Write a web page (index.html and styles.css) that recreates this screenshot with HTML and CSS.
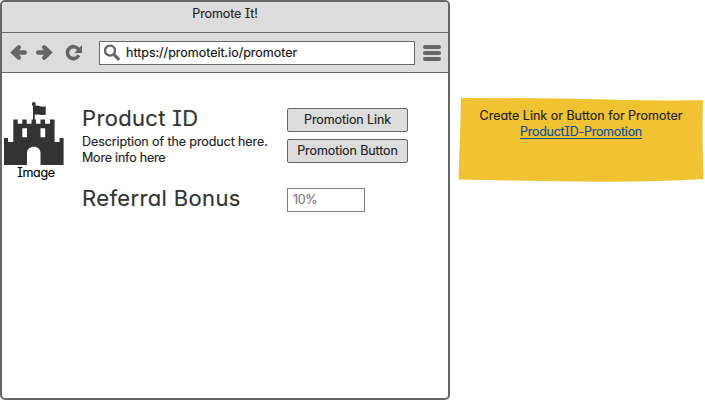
FILE: index.html
```html
<!DOCTYPE html>
<html lang="en">
<head>
<meta charset="utf-8">
<title>Promote It!</title>
<link rel="stylesheet" href="styles.css">
</head>
<body>
<main class="canvas">
  <section class="browser">
    <header class="titlebar"><span class="window-title">Promote It!</span></header>
    <nav class="toolbar">
      <svg class="nav-icons" width="90" height="40" viewBox="0 0 90 40" fill="none" stroke="#666" stroke-width="4.400">
        <path d="M22.800 19.500H12M16.800 14.300l-5.400 5.200 5.400 5.200" stroke-linecap="round"/>
        <path d="M36.200 19.500H47M42.200 14.300l5.400 5.200-5.400 5.200" stroke-linecap="round"/>
        <path d="M77 17.400A6 6 0 1 0 76.800 22.300" stroke-width="3.600"/>
        <path d="M80 12v8h-7.500z" fill="#666" stroke="none"/>
      </svg>
      <div class="address">
        <svg width="18" height="18" viewBox="0 0 18 18" fill="none" stroke="#666">
          <circle cx="6" cy="6.600" r="5" stroke-width="2.400"/>
          <path d="M10.300 10.800l4 4" stroke-width="3.200" stroke-linecap="round"/>
        </svg>
        <span class="url">https://promoteit.io/promoter</span>
      </div>
      <div class="menu"><i></i><i></i><i></i></div>
    </nav>
    <div class="page">
      <figure class="product-image">
        <svg width="60" height="64" viewBox="0 0 60 64" fill="#333">
          <circle cx="29.800" cy="2" r="2"/>
          <path d="M29 2h1.700v17H29zM30.700 3.800q3-.500 5.500 .400t5.500 0v8.500q-3 .600-5.500 0t-5.500 0z"/>
          <path fill-rule="evenodd" d="M0 63V36h4v4h5.300V17.600h4.400v4.200h4.600v-4.200h4.400v4.200h4.800v-4.200H32v4.200h4.500v-4.200H41v4.200h5v-4.200h4.600V40h5v-4h4v27H36.500V51c0-8.500-13.500-8.500-13.500 0v12zM18.300 26.300v9H23v-9zM36.500 26.300v9h4.700v-9z"/>
        </svg>
        <figcaption>Image</figcaption>
      </figure>
      <div class="info">
        <h1 class="product">Product ID</h1>
        <p><span class="line-one">Description of the product here.</span><br><span class="line-two">More info here</span></p>
        <h1 class="bonus">Referral Bonus</h1>
      </div>
      <div class="actions">
        <button>Promotion Link</button>
        <button>Promotion Button</button>
        <div class="field">10%</div>
      </div>
    </div>
  </section>
  <aside class="note">
    <svg class="paper" width="247" height="86" viewBox="0 0 247 86"><path d="M3 1Q90 1 150 2.500T245 3Q244 40 245.500 82Q190 85.500 120 84.500T.500 82.500Q2 40 3 1Z" fill="#f1c232"/></svg>
    <div class="note-text"><span class="create">Create Link or Button for Promoter</span><a href="#">ProductID-Promotion</a></div>
  </aside>
</main>
</body>
</html>
```
FILE: styles.css
```css
* { box-sizing: border-box; }
body {
  margin: 0;
  background: #fff;
  color: #222;
  font: 12.500px/16px Inter, "Noto Sans", sans-serif;
  font-feature-settings: "cv08", "cv11";
  -webkit-text-stroke: 0.150px currentColor;
}
.canvas { display: flex; width: 705px; height: 400px; overflow: hidden; }
.browser {
  width: 450px;
  height: 400px;
  border: 2px solid #666;
  border-radius: 5px;
  overflow: hidden;
}
.titlebar {
  height: 31px;
  padding: 4px 0 0;
  background: #ddd;
  border-bottom: 1px solid #666;
  text-align: center;
}
.window-title { letter-spacing: -0.100px; }
.toolbar {
  display: flex;
  align-items: center;
  height: 40px;
  background: #ddd;
  border-bottom: 1px solid #666;
}
.nav-icons { width: 90px; flex: none; }
.address {
  display: flex;
  align-items: center;
  width: 316px;
  height: 24px;
  margin-left: 7px;
  padding-left: 4px;
  background: #fff;
  border: 1px solid #666;
}
.url { margin-left: 4px; white-space: nowrap; color: #111; }
.menu { display: grid; gap: 2px; width: 18px; margin-left: 8px; }
.menu i { height: 4px; border-radius: 2px; background: #666; }
.page { display: flex; }
.product-image { width: 60px; margin: 29px 0 0 2px; text-align: center; color: #000; }
.product-image svg { display: block; }
.product-image figcaption { margin-top: -1px; padding-left: 4px; letter-spacing: -0.300px; white-space: nowrap; }
.info { width: 205px; margin: 31px 0 0 18px; white-space: nowrap; }
h1 { margin: 0; color: #333; font-size: 22px; font-weight: 400; line-height: 28px; }
.product { letter-spacing: 0.340px; }
.bonus { letter-spacing: 0.360px; }
p { margin: 2px 0 18px; }
.line-one { letter-spacing: -0.090px; }
.line-two { letter-spacing: -0.200px; }
.actions { width: 121px; padding-top: 35px; }
button {
  display: block;
  width: 121px;
  height: 24px;
  margin: 0 0 7px;
  padding: 0;
  border: 1px solid #666;
  border-radius: 2px;
  background: #ddd;
  color: #222;
  font: inherit;
  font-feature-settings: inherit;
  letter-spacing: -0.100px;
  white-space: nowrap;
}
.field {
  width: 78px;
  height: 24px;
  margin-top: 25px;
  padding: 3px 5px;
  border: 1px solid #7c7c8a;
  color: #777;
  letter-spacing: -0.300px;
}
.note { position: relative; width: 247px; height: 86px; margin: 97px 0 0 8px; }
.paper { position: absolute; inset: 0; }
.note-text {
  position: relative;
  display: flex;
  flex-direction: column;
  align-items: center;
  padding: 11px 1px 0 0;
  white-space: nowrap;
}
a {
  height: 15px;
  color: #0b4f9e;
  letter-spacing: -0.260px;
  border-bottom: 1px solid #0b4f9e;
  text-decoration: none;
}
```
